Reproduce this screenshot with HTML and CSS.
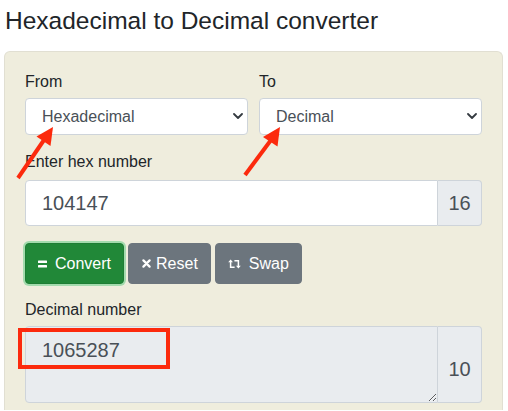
FILE: index.html
```html
<!DOCTYPE html>
<html lang="en">
<head>
<meta charset="utf-8">
<title>Hexadecimal to Decimal converter</title>
<link rel="stylesheet" href="styles.css">
</head>
<body>
<h2 class="title">Hexadecimal to Decimal converter</h2>
<form class="card">
  <div class="row">
    <div class="col">
      <label class="lbl lbl-sel">From</label>
      <div class="sel-wrap">
        <select class="sel"><option>Hexadecimal</option></select>
        <svg class="chev" width="10" height="6" viewBox="0 0 10 6"><path d="M1 1 L5 5 L9 1" fill="none" stroke="#343a40" stroke-width="1.8" stroke-linecap="round" stroke-linejoin="round"/></svg>
      </div>
    </div>
    <div class="col">
      <label class="lbl lbl-sel">To</label>
      <div class="sel-wrap">
        <select class="sel"><option>Decimal</option></select>
        <svg class="chev" width="10" height="6" viewBox="0 0 10 6"><path d="M1 1 L5 5 L9 1" fill="none" stroke="#343a40" stroke-width="1.8" stroke-linecap="round" stroke-linejoin="round"/></svg>
      </div>
    </div>
  </div>
  <label class="lbl lbl-in">Enter hex number</label>
  <div class="group">
    <input class="inp" type="text" value="104147">
    <span class="addon">16</span>
  </div>
  <div class="btns">
    <button type="button" class="btn btn-green"><svg class="ic ic-eq" width="9" height="8" viewBox="0 0 9 8"><rect x="0" y="0.5" width="9" height="2.4" rx="0.5" fill="#fff"/><rect x="0" y="5" width="9" height="2.4" rx="0.5" fill="#fff"/></svg><span>Convert</span></button>
    <button type="button" class="btn btn-gray"><svg class="ic ic-x" width="9" height="9" viewBox="0 0 9 9"><path d="M1.4 1.4 L7.6 7.6 M7.6 1.4 L1.4 7.6" stroke="#fff" stroke-width="2.2" stroke-linecap="round"/></svg><span>Reset</span></button>
    <button type="button" class="btn btn-gray"><svg class="ic ic-sw" width="13" height="10" viewBox="0 0 13 10"><path d="M2.6 1.8 V8.3 H6.6 M6.4 1.7 H10.4 V7.6" fill="none" stroke="#fff" stroke-width="1.5"/><path d="M0.2 3.2 L2.6 0.4 L5 3.2 Z M8 6.8 L10.4 9.6 L12.8 6.8 Z" fill="#fff"/></svg><span>Swap</span></button>
  </div>
  <label class="lbl lbl-out">Decimal number</label>
  <div class="group">
    <textarea class="out" readonly>1065287</textarea>
    <span class="addon addon-out">10</span>
  </div>
</form>
<svg class="marks" width="508" height="411" viewBox="0 0 508 411">
  <g stroke="#fc2a0d" stroke-width="4" fill="none">
    <line x1="18" y1="178" x2="44" y2="140"/>
    <line x1="245" y1="175" x2="271" y2="140"/>
    <rect x="20" y="330" width="148" height="37"/>
  </g>
  <g fill="#fc2a0d">
    <polygon points="53,127 50.5,146 36.5,136.5"/>
    <polygon points="280,127 277.5,146.5 263,137"/>
  </g>
</svg>
</body>
</html>
```

FILE: styles.css
```css
* {
  box-sizing: border-box;
}

html,
body {
  overflow: hidden;
}

body {
  margin: 0;
  padding: 0 5px 0 4px;
  position: relative;
  font-family: "Liberation Sans", Arial, sans-serif;
  color: #212529;
  background: #fff;
  width: 508px;
  height: 411px;
}

.title {
  margin: 6px 0 16px 1px;
  font-size: 24.5px;
  font-weight: 400;
  line-height: 29px;
  color: #212529;
}

.card {
  display: block;
  background: #efeddd;
  border: 1px solid #e1dfd2;
  border-bottom: 0;
  border-radius: 6px 6px 0 0;
  padding: 18px 20px 7px;
}

.row {
  display: grid;
  grid-template-columns: 1fr 1fr;
  column-gap: 11px;
}

.lbl {
  display: block;
  font-size: 16px;
  line-height: 24px;
}

.lbl-sel {
  margin-bottom: 4px;
}

.lbl-in {
  margin-top: 15px;
  margin-bottom: 6px;
}

.lbl-out {
  margin-top: 14px;
  margin-bottom: 4px;
}

.sel-wrap {
  position: relative;
}

.sel {
  display: block;
  width: 100%;
  height: 37px;
  appearance: none;
  -webkit-appearance: none;
  background: #fff;
  border: 1px solid #ced4da;
  border-radius: 4px;
  padding: 0 32px 0 16px;
  font-family: inherit;
  font-size: 16px;
  color: #495057;
}

.chev {
  position: absolute;
  right: 5px;
  top: 15px;
}

.group {
  display: flex;
}

.inp {
  flex: 1;
  min-width: 0;
  height: 46px;
  border: 1px solid #ced4da;
  border-radius: 4px 0 0 4px;
  padding: 0 16px;
  font-family: inherit;
  font-size: 20px;
  color: #495057;
  background: #fff;
  outline: none;
}

.addon {
  width: 44px;
  display: flex;
  align-items: center;
  justify-content: center;
  background: #e9ecef;
  border: 1px solid #ced4da;
  border-left: 0;
  border-radius: 0 4px 4px 0;
  font-size: 20px;
  color: #495057;
}

.addon-out {
  padding-top: 10px;
}

.btns {
  display: flex;
  gap: 4px;
  margin-top: 17px;
}

.btn {
  display: inline-flex;
  align-items: center;
  height: 41px;
  padding: 0 12px;
  border-radius: 4px;
  border: 1px solid transparent;
  font-family: inherit;
  font-size: 16px;
  color: #fff;
  cursor: pointer;
}

.btn-green {
  background: #218838;
  border-color: #1e7e34;
  box-shadow: 0 0 0 2px #a3dbad;
}

.btn-gray {
  background: #6c757d;
  border-color: #6c757d;
}

.ic {
  display: block;
}

.ic-eq {
  margin-right: 8px;
}

.ic-x {
  margin-left: 1px;
  margin-right: 5px;
}

.ic-sw {
  margin-right: 8px;
}

.out {
  flex: 1;
  min-width: 0;
  height: 77px;
  background: #e9ecef;
  border: 1px solid #ced4da;
  border-radius: 4px 0 0 4px;
  padding: 8px 16px;
  font-family: inherit;
  font-size: 20px;
  line-height: 30px;
  color: #495057;
  resize: vertical;
  outline: none;
}

.marks {
  position: absolute;
  top: 0;
  left: 0;
  pointer-events: none;
}
```
